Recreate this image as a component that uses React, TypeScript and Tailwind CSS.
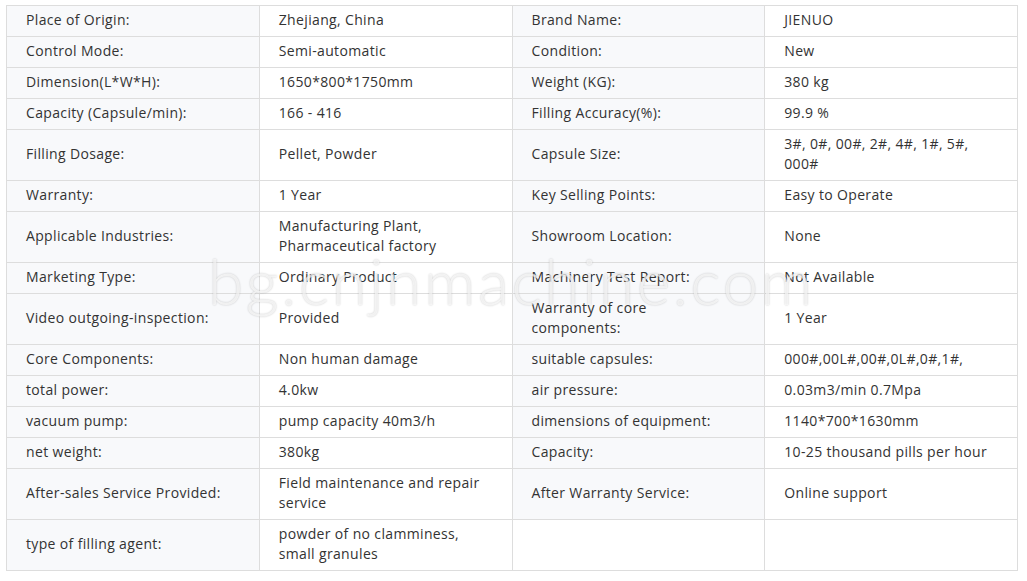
import type { ReactNode } from 'react';

type Row = [ReactNode, ReactNode, ReactNode, ReactNode];

const rows: Row[] = [
  ['Place of Origin:', 'Zhejiang, China', 'Brand Name:', 'JIENUO'],
  ['Control Mode:', 'Semi-automatic', 'Condition:', 'New'],
  ['Dimension(L*W*H):', '1650*800*1750mm', 'Weight (KG):', '380 kg'],
  ['Capacity (Capsule/min):', '166 - 416', 'Filling Accuracy(%):', '99.9 %'],
  ['Filling Dosage:', 'Pellet, Powder', 'Capsule Size:', <>3#, 0#, 00#, 2#, 4#, 1#, 5#,<br />000#</>],
  ['Warranty:', '1 Year', 'Key Selling Points:', 'Easy to Operate'],
  ['Applicable Industries:', <>Manufacturing Plant,<br />Pharmaceutical factory</>, 'Showroom Location:', 'None'],
  ['Marketing Type:', 'Ordinary Product', 'Machinery Test Report:', 'Not Available'],
  ['Video outgoing-inspection:', 'Provided', <>Warranty of core<br />components:</>, '1 Year'],
  ['Core Components:', 'Non human damage', 'suitable capsules:', '000#,00L#,00#,0L#,0#,1#,'],
  ['total power:', '4.0kw', 'air pressure:', '0.03m3/min 0.7Mpa'],
  ['vacuum pump:', 'pump capacity 40m3/h', 'dimensions of equipment:', '1140*700*1630mm'],
  ['net weight:', '380kg', 'Capacity:', '10-25 thousand pills per hour'],
  ['After-sales Service Provided:', <>Field maintenance and repair<br />service</>, 'After Warranty Service:', 'Online support'],
  ['type of filling agent:', <>powder of no clamminess,<br />small granules</>, '', ''],
];

function Cell({ children, label }: { children: ReactNode; label?: boolean }) {
  return (
    <td
      className={
        'w-1/4 border border-[#dddddd] px-[19px] pt-[4px] pb-[6px] align-middle ' +
        (label && children !== '' ? 'bg-[#f8f9fb]' : 'bg-white')
      }
    >
      {children}
    </td>
  );
}

export default function App() {
  return (
    <div className="relative h-[581px] w-[1027px] overflow-hidden bg-white font-['Open_Sans',sans-serif] text-[14px] leading-5 tracking-[0.35px] text-[#333333]">
      <table className="ml-[6px] mt-[5px] w-[1012px] table-fixed border-collapse">
        <tbody>
          {rows.map((r, i) => (
            <tr key={i}>
              <Cell label>{r[0]}</Cell>
              <Cell>{r[1]}</Cell>
              <Cell label>{r[2]}</Cell>
              <Cell>{r[3]}</Cell>
            </tr>
          ))}
        </tbody>
      </table>

      {/* watermark */}
      <div className="pointer-events-none absolute left-[208px] top-[241px] font-['Lato',sans-serif] text-[64px] font-light leading-[80px] tracking-[2.6px] text-white/70 [text-shadow:0_0_2px_rgba(0,0,0,0.22)]">
        bg.cnjnmachine.com
      </div>
    </div>
  );
}
